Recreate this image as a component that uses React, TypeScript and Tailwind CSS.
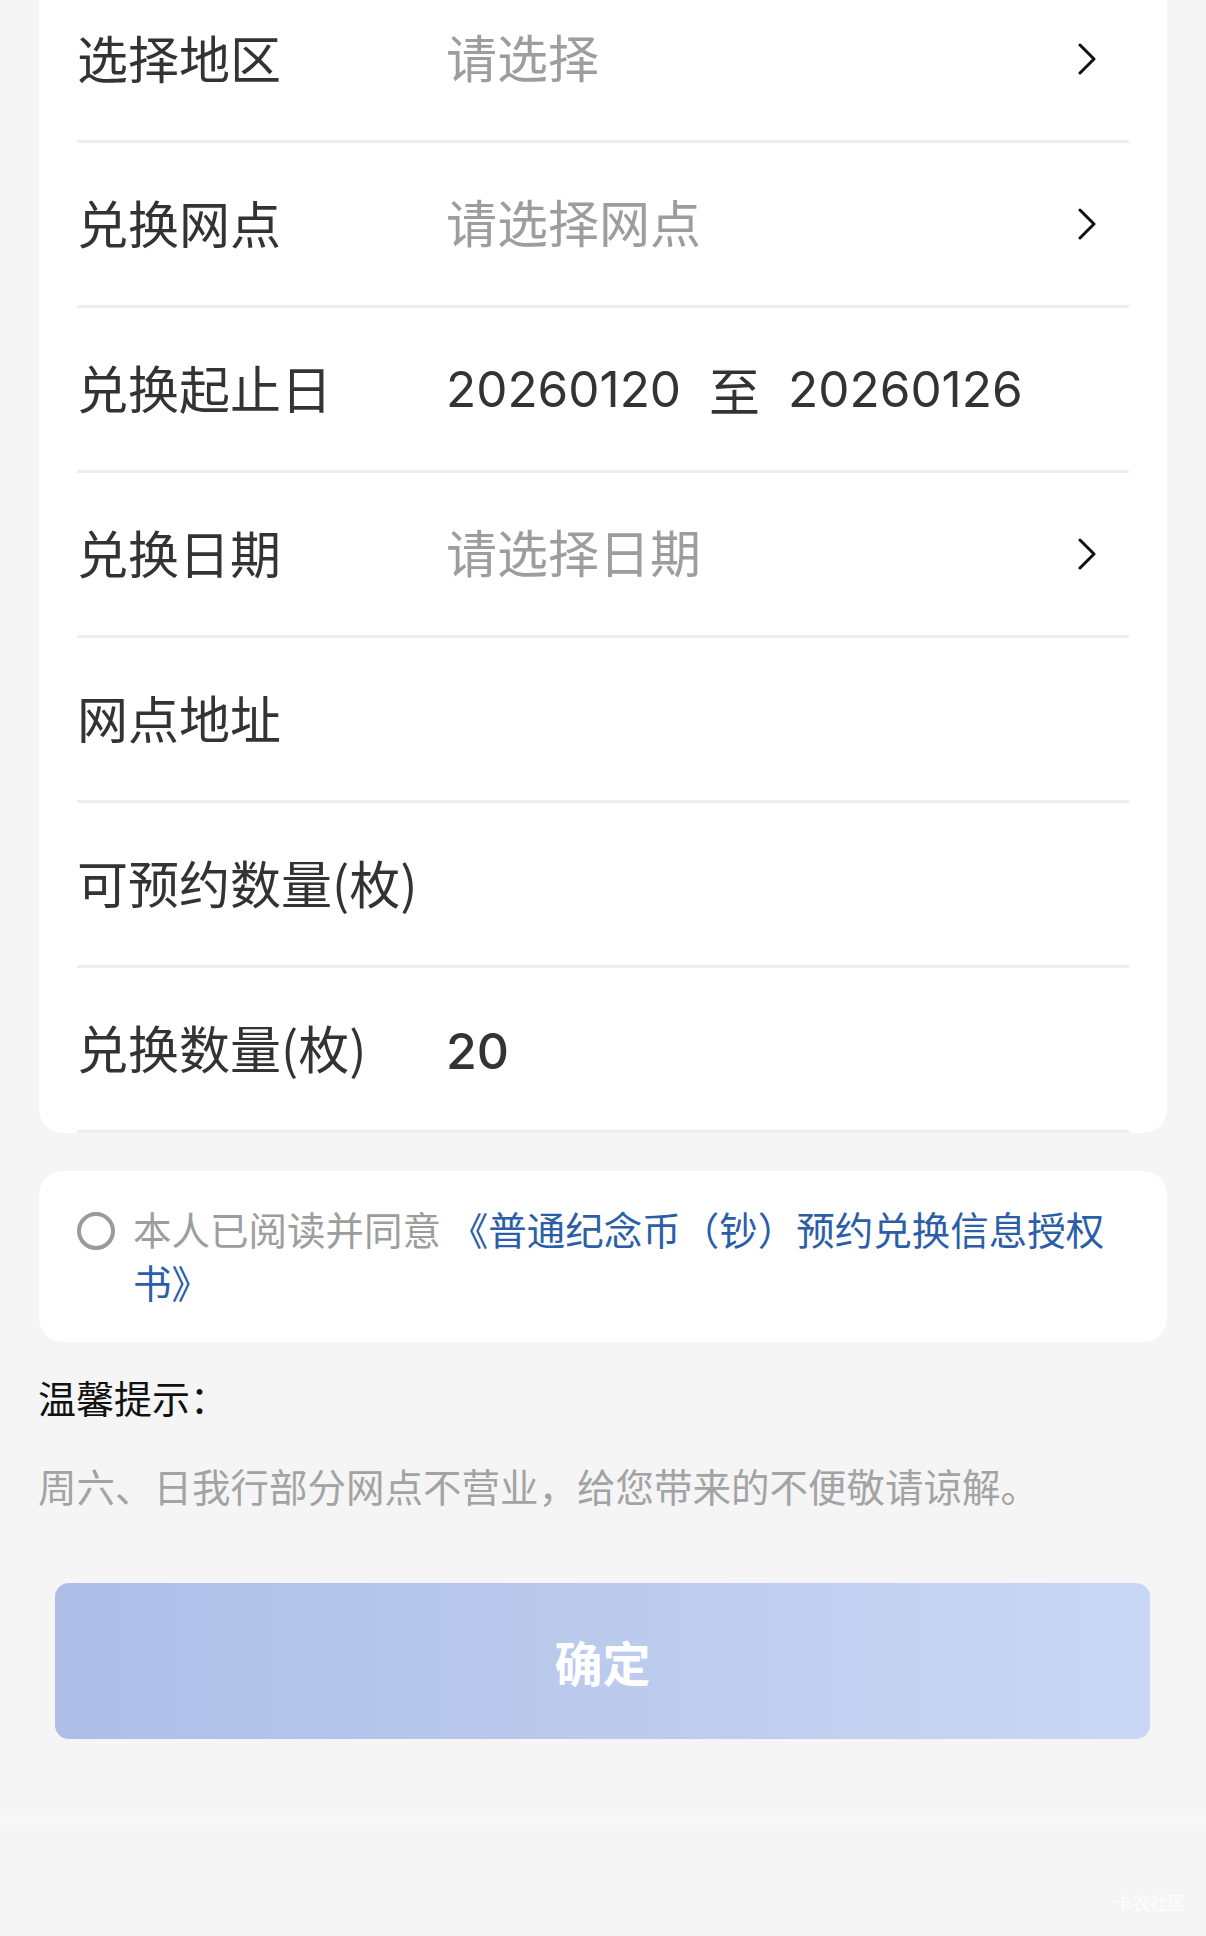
import React from "react";

const font = {
	fontFamily: '"Noto Sans CJK SC", "Noto Sans", sans-serif',
};

const digitFont = {
	fontFamily: 'Inter, "Noto Sans CJK SC", sans-serif',
};

function Chevron() {
	return (
		<svg width="20" height="32" viewBox="0 0 20 32" fill="none">
			<path
				d="M3 2 L17 16 L3 30"
				stroke="#111"
				strokeWidth="3"
				strokeLinecap="round"
				strokeLinejoin="round"
			/>
		</svg>
	);
}

interface RowProps {
	label: string;
	value?: React.ReactNode;
	placeholder?: boolean;
	arrow?: boolean;
}

function Row({ label, value, placeholder, arrow }: RowProps) {
	return (
		<div className="h-[165px] flex items-center border-b-[3px] border-[#eeeeee]">
			<div className="w-[369px] shrink-0 text-[51px] text-[#333333] -mt-[4px]">
				{label}
			</div>
			<div
				className={
					placeholder
						? "flex-1 text-[51px] text-[#9d9d9d] -mt-[5px]"
						: "flex-1 text-[51px] text-[#333333]"
				}
			>
				{value}
			</div>
			{arrow && (
				<div className="pr-[32px]">
					<Chevron />
				</div>
			)}
		</div>
	);
}

export default function App() {
	return (
		<div
			className="w-[1206px] h-[1936px] bg-[#f5f5f5] overflow-hidden flex flex-col"
			style={font}
		>
			<div className="-mt-[22px] mx-[39px] bg-white rounded-b-[24px] overflow-hidden px-[38px]">
				<Row label="选择地区" value="请选择" placeholder arrow />
				<Row label="兑换网点" value="请选择网点" placeholder arrow />
				<Row
					label="兑换起止日"
					value={
						<div className="flex items-center">
							<span className="text-[49.5px]" style={digitFont}>
								20260120
							</span>
							<span className="ml-[28px] mr-[28px]">至</span>
							<span className="text-[49.5px]" style={digitFont}>
								20260126
							</span>
						</div>
					}
				/>
				<Row label="兑换日期" value="请选择日期" placeholder arrow />
				<Row label="网点地址" />
				<Row label="可预约数量(枚)" />
				<Row
					label="兑换数量(枚)"
					value={
						<span className="text-[50px] font-medium" style={digitFont}>
							20
						</span>
					}
				/>
			</div>

			<div className="mt-[38px] mx-[39px] bg-white rounded-[24px] h-[171px] px-[38px] pt-[31px] flex">
				<div className="shrink-0 w-[38px] h-[38px] rounded-full border-[4px] border-[#9a9a9a] mt-[10px] mr-[18px]" />
				<div className="text-[38.5px] leading-[53px] text-[#9d9d9d]">
					本人已阅读并同意
					<span className="text-[#2c5ea8]"> 《普通纪念币（钞）预约兑换信息授权书》</span>
				</div>
			</div>

			<div className="mt-[29px] px-[38px] text-[38px] leading-[52px] text-[#111111]">
				温馨提示：
			</div>
			<div className="mt-[36px] px-[38px] text-[38.5px] leading-[52px] text-[#a3a3a3]">
				周六、日我行部分网点不营业，给您带来的不便敬请谅解。
			</div>

			<div className="mt-[72px] ml-[55px] w-[1095px] h-[156px] rounded-[14px] bg-gradient-to-r from-[#aebde6] to-[#c8d8f4] flex items-center justify-center">
				<span className="text-[48px] font-bold text-white">确定</span>
			</div>

			<div className="mt-[66px] h-[30px] bg-gradient-to-b from-[#f5f5f5] via-[#f8f8f8] to-[#f5f5f5]" />

			<div className="mt-auto flex justify-end pr-[20px] pb-[20px]">
				<span className="text-[18px] text-white/80">卡农社区</span>
			</div>
		</div>
	);
}
